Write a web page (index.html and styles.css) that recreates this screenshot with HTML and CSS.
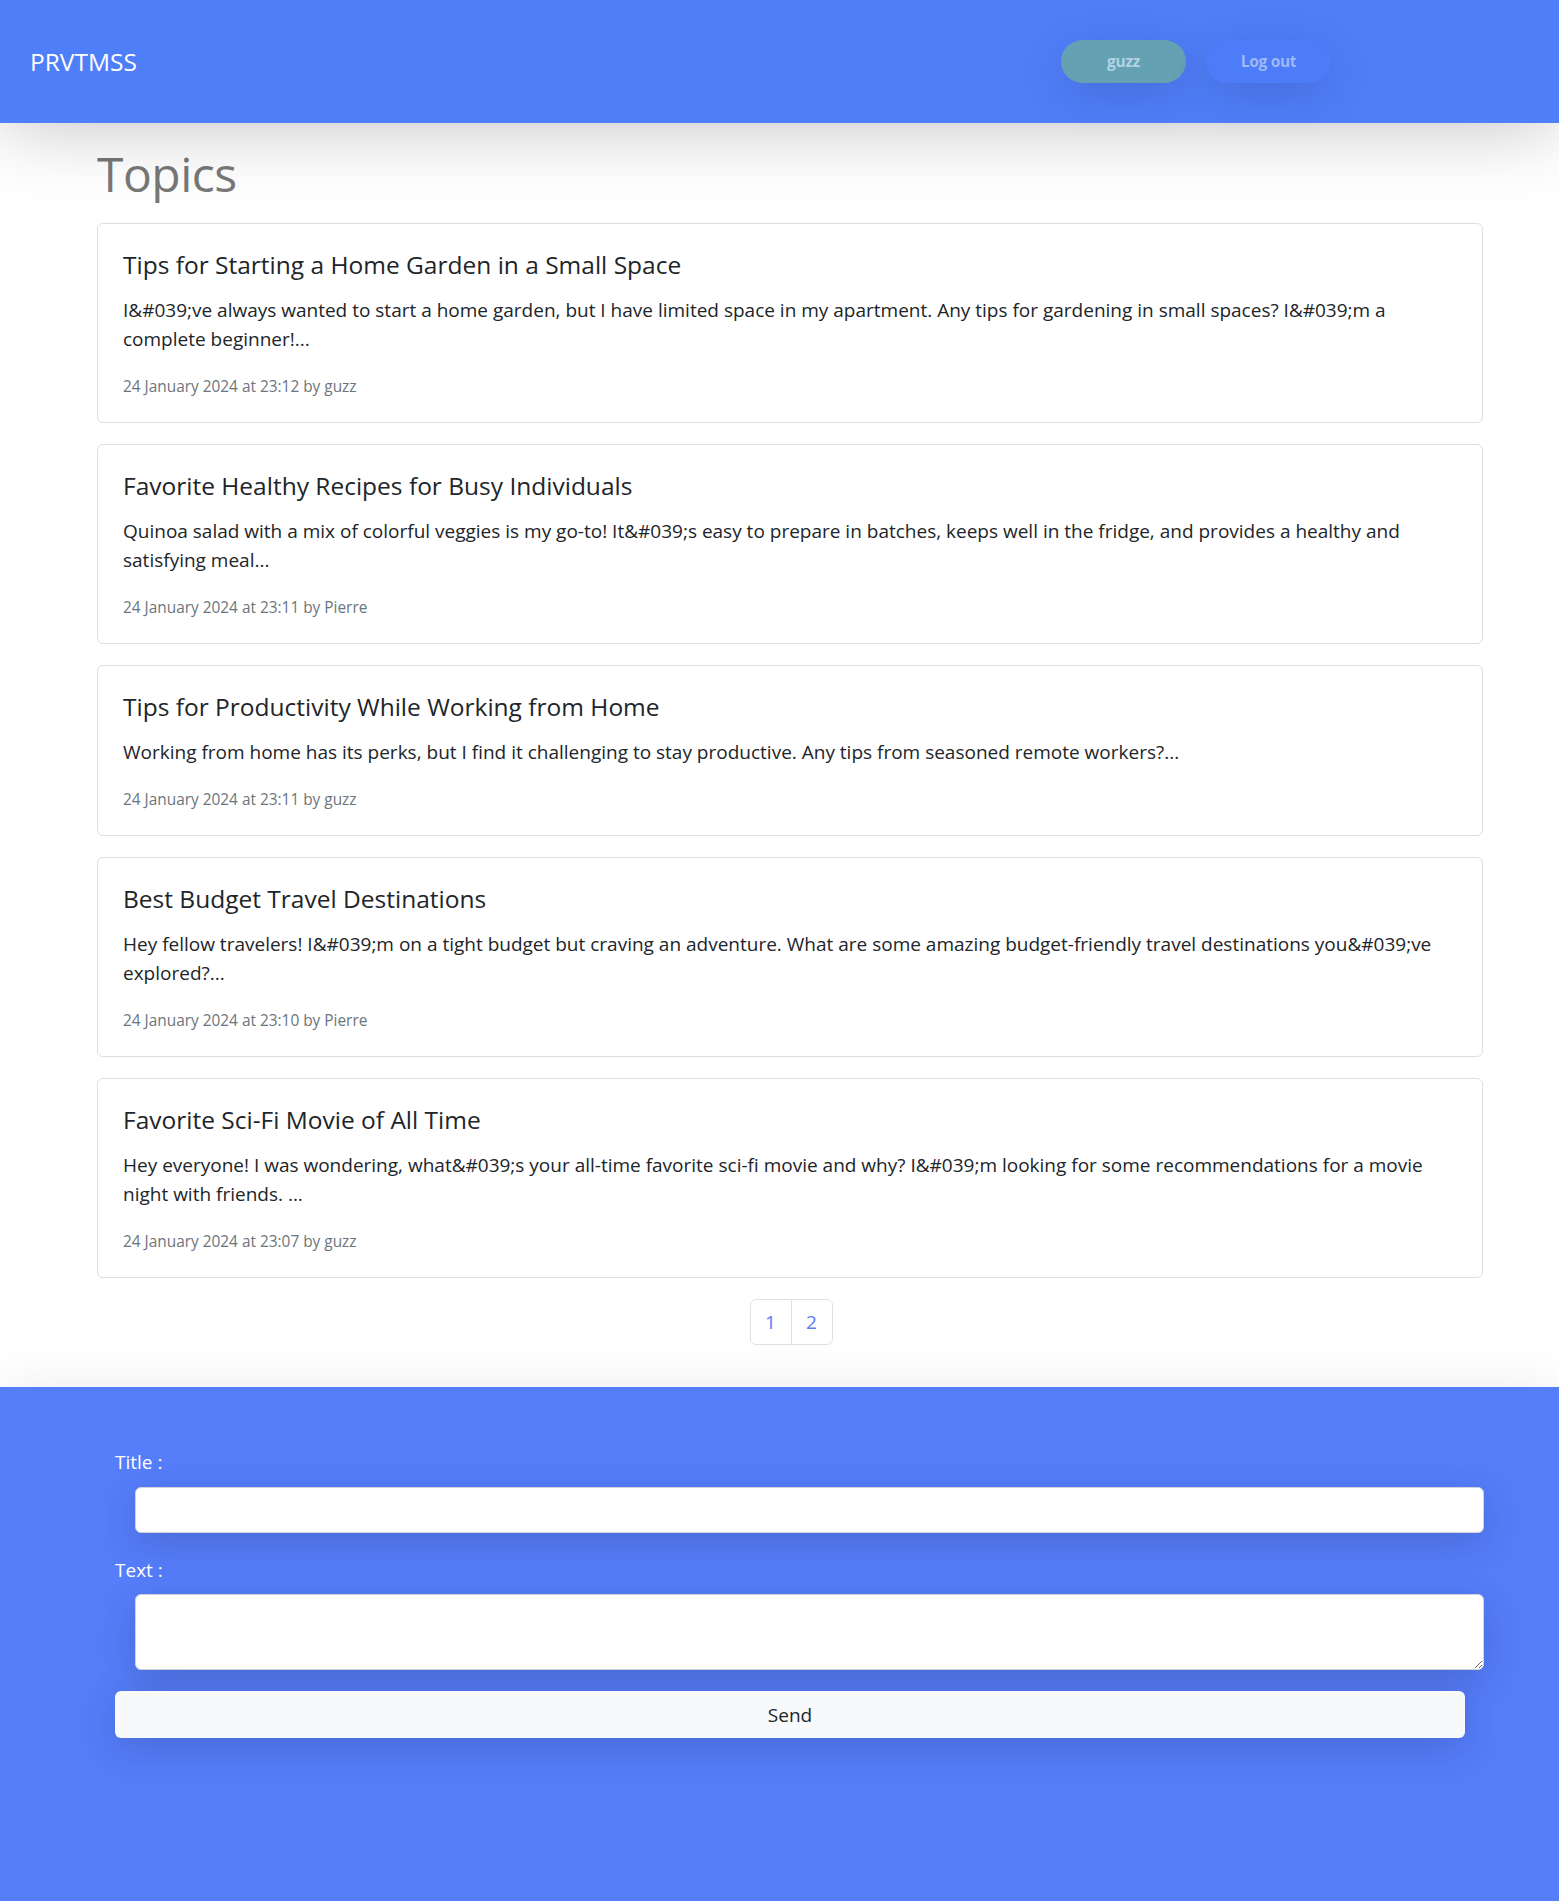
FILE: index.html
```html
<!DOCTYPE html>
<html lang="en">
<head>
<meta charset="utf-8">
<title>PRVTMSS</title>
<link rel="stylesheet" href="styles.css">
</head>
<body>
<header class="navbar">
  <a class="brand" href="#">PRVTMSS</a>
  <div class="nav-actions">
    <a class="pill pill-user" href="#">guzz</a>
    <a class="pill pill-logout" href="#">Log out</a>
  </div>
</header>

<main class="container">
  <h1 class="page-title">Topics</h1>

  <article class="card">
    <h5 class="card-title">Tips for Starting a Home Garden in a Small Space</h5>
    <p class="card-text">I&amp;#039;ve always wanted to start a home garden, but I have limited space in my apartment. Any tips for gardening in small spaces? I&amp;#039;m a complete beginner!...</p>
    <p class="card-meta">24 January 2024 at 23:12 by guzz</p>
  </article>

  <article class="card">
    <h5 class="card-title">Favorite Healthy Recipes for Busy Individuals</h5>
    <p class="card-text">Quinoa salad with a mix of colorful veggies is my go-to! It&amp;#039;s easy to prepare in batches, keeps well in the fridge, and provides a healthy and satisfying meal...</p>
    <p class="card-meta">24 January 2024 at 23:11 by Pierre</p>
  </article>

  <article class="card">
    <h5 class="card-title">Tips for Productivity While Working from Home</h5>
    <p class="card-text">Working from home has its perks, but I find it challenging to stay productive. Any tips from seasoned remote workers?...</p>
    <p class="card-meta">24 January 2024 at 23:11 by guzz</p>
  </article>

  <article class="card">
    <h5 class="card-title">Best Budget Travel Destinations</h5>
    <p class="card-text">Hey fellow travelers! I&amp;#039;m on a tight budget but craving an adventure. What are some amazing budget-friendly travel destinations you&amp;#039;ve explored?...</p>
    <p class="card-meta">24 January 2024 at 23:10 by Pierre</p>
  </article>

  <article class="card">
    <h5 class="card-title">Favorite Sci-Fi Movie of All Time</h5>
    <p class="card-text">Hey everyone! I was wondering, what&amp;#039;s your all-time favorite sci-fi movie and why? I&amp;#039;m looking for some recommendations for a movie night with friends. ...</p>
    <p class="card-meta">24 January 2024 at 23:07 by guzz</p>
  </article>

  <nav class="pagination">
    <a class="page-link" href="#">1</a>
    <a class="page-link" href="#">2</a>
  </nav>
</main>

<footer class="footer">
  <form class="post-form">
    <label class="form-label" for="title">Title :</label>
    <input class="form-control" id="title" type="text">
    <label class="form-label label-text" for="text">Text :</label>
    <textarea class="form-control form-area" id="text"></textarea>
    <button class="btn-send" type="button">Send</button>
  </form>
</footer>
</body>
</html>
```

FILE: styles.css
```css
* { box-sizing: border-box; }

html, body {
  margin: 0;
  padding: 0;
}

body {
  font-family: "Open Sans", "Noto Sans", sans-serif;
  color: #212529;
  background: #ffffff;
  min-height: 1901px;
  display: flex;
  flex-direction: column;
}

a { text-decoration: none; }

/* ---------- navbar ---------- */
.navbar {
  position: relative;
  z-index: 2;
  height: 123px;
  background: #4f7ef9;
  display: flex;
  align-items: center;
  justify-content: space-between;
  padding: 0 228px 0 30px;
  box-shadow: 0 0 80px rgba(0, 0, 0, 0.26);
}

.brand {
  color: #ffffff;
  font-size: 24.5px;
  margin-top: 0;
}

.nav-actions {
  display: flex;
  gap: 20px;
  margin-top: -1px;
}

.pill {
  width: 125px;
  height: 43px;
  border-radius: 22px;
  display: flex;
  align-items: center;
  justify-content: center;
  font-size: 15.5px;
  font-weight: 700;
  letter-spacing: -0.3px;
  box-shadow: 0 12px 45px rgba(0, 0, 0, 0.14);
}

.pill-user {
  background: #63a1b3;
  color: #b3d3e4;
}

.pill-logout {
  background: #4c7cf7;
  color: #9fb8f7;
}

/* ---------- main ---------- */
.container {
  width: 1386px;
  margin-left: 97px;
  padding-top: 20px;
  padding-bottom: 42px;
}

.page-title {
  margin: 0 0 19px;
  font-size: 48px;
  line-height: 61px;
  font-weight: 400;
  color: #787878;
  letter-spacing: -0.5px;
}

.card {
  border: 1px solid #dedede;
  border-radius: 6px;
  padding: 26px 25px 23px;
  margin-bottom: 21px;
  background: #ffffff;
}

.card-title {
  margin: 0 0 16px;
  font-size: 24.5px;
  line-height: 30px;
  font-weight: 500;
}

.card-text {
  margin: 0;
  font-size: 19px;
  line-height: 29px;
}

.card-meta {
  margin: 21px 0 0;
  font-size: 15.4px;
  line-height: 24px;
  color: #6c757d;
}

.pagination {
  display: flex;
  justify-content: center;
  padding-left: 2px;
}

.page-link {
  width: 42px;
  height: 46px;
  border: 1px solid #dee2e6;
  display: flex;
  align-items: center;
  justify-content: center;
  color: #5a7cf8;
  font-size: 19px;
  background: #ffffff;
}

.page-link:first-child {
  border-radius: 6px 0 0 6px;
}

.page-link + .page-link {
  margin-left: -1px;
  border-radius: 0 6px 6px 0;
}

/* ---------- footer ---------- */
.footer {
  flex: 1;
  position: relative;
  background: #567dfa;
  box-shadow: 0 0 50px rgba(0, 0, 0, 0.08);
  padding-top: 61px;
}

.post-form {
  width: 1350px;
  margin-left: 115px;
  display: flex;
  flex-direction: column;
}

.form-label {
  color: #ffffff;
  font-size: 19px;
  line-height: 29px;
  margin-bottom: 10px;
}

.label-text {
  margin-top: 23px;
  margin-bottom: 9px;
}

.form-control {
  width: 1349px;
  margin-left: 20px;
  height: 46px;
  border: 1px solid #d0d4da;
  border-radius: 6px;
  background: #ffffff;
  font: inherit;
  box-shadow: 0 10px 40px rgba(0, 0, 0, 0.16);
}

.form-area {
  height: 76px;
  resize: vertical;
}

.btn-send {
  margin-top: 21px;
  height: 47px;
  width: 1350px;
  border: 0;
  border-radius: 6px;
  background: #f8f9fa;
  color: #212529;
  font-family: inherit;
  font-size: 19px;
  box-shadow: 0 10px 40px rgba(0, 0, 0, 0.16);
}
```
